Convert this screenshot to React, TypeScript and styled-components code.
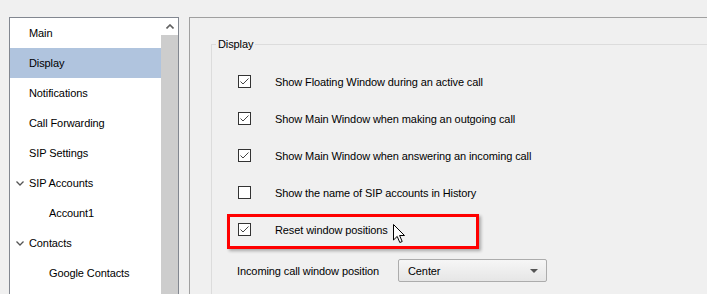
import React from "react";
import styled, { createGlobalStyle } from "styled-components";

const GlobalStyle = createGlobalStyle`
  html, body {
    margin: 0;
    padding: 0;
    background: #f0f0f0;
    font-family: "Liberation Sans", Arial, sans-serif;
    font-size: 11px;
    letter-spacing: -0.1px;
    color: #000;
    overflow: hidden;
  }
`;

const Page = styled.div`
  display: flex;
  gap: 10px;
  padding: 17px 0 0 9px;
  height: 294px;
  box-sizing: border-box;
  overflow: hidden;
`;

const Sidebar = styled.div`
  width: 170px;
  height: 300px;
  flex-shrink: 0;
  box-sizing: border-box;
  border: 1px solid #828790;
  background: #fff;
  display: flex;
`;

const TreeList = styled.div`
  flex: 1;
  display: flex;
  flex-direction: column;
`;

const TreeRow = styled.div<{ $depth: number; $selected?: boolean }>`
  height: 30px;
  flex-shrink: 0;
  display: flex;
  align-items: center;
  padding-left: ${(p) => 5 + p.$depth * 20}px;
  background: ${(p) => (p.$selected ? "#b0c4de" : "transparent")};
`;

const Expander = styled.span`
  width: 14px;
  display: flex;
  align-items: center;
  padding-left: 1px;
  box-sizing: border-box;
`;

const ScrollBar = styled.div`
  width: 17px;
  display: flex;
  flex-direction: column;
`;

const ScrollUp = styled.div`
  height: 17px;
  background: #fff;
  display: flex;
  align-items: center;
  justify-content: center;
`;

const ScrollTrack = styled.div`
  flex: 1;
  background: #cdcdcd;
`;

const Panel = styled.div`
  flex: 1;
  border-top: 1px solid #a0a0a0;
  border-left: 1px solid #a0a0a0;
  padding: 19px 0 0 21px;
`;

const Group = styled.fieldset`
  margin: 0;
  padding: 0;
  border: none;
  border-top: 1px solid #dcdcdc;
  border-left: 1px solid #dcdcdc;
  height: 300px;
`;

const Legend = styled.legend`
  padding: 0 2px;
  margin-left: 4px;
  line-height: 14px;
`;

const GroupBody = styled.div`
  display: flex;
  flex-direction: column;
  gap: 24px;
  padding: 24px 0 0 26px;
`;

const CheckRow = styled.div<{ $highlighted?: boolean }>`
  position: relative;
  height: 13px;
  display: flex;
  align-items: center;
  gap: 24px;
  white-space: nowrap;

  ${(p) =>
    p.$highlighted &&
    `
    &::after {
      content: "";
      position: absolute;
      left: -11px;
      top: -9px;
      width: 252px;
      height: 35px;
      box-sizing: border-box;
      border: 3px solid #ff0000;
      box-shadow: 2px 2px 3px rgba(0, 0, 0, 0.3);
    }
  `}
`;

const Box = styled.span`
  width: 13px;
  height: 13px;
  box-sizing: border-box;
  border: 1px solid #333;
  background: #fff;
  display: flex;
  flex-shrink: 0;
`;

const Cursor = styled.svg`
  position: absolute;
  left: 155px;
  top: 1px;
  z-index: 2;
`;

const ComboRow = styled.div`
  display: flex;
  align-items: center;
  margin-top: -1px;
  margin-left: -1px;
`;

const ComboLabel = styled.span`
  width: 161px;
  white-space: nowrap;
`;

const Combo = styled.div`
  width: 149px;
  height: 23px;
  box-sizing: border-box;
  border: 1px solid #acacac;
  border-radius: 2px;
  background: linear-gradient(#f6f6f6, #e6e6e6);
  display: flex;
  align-items: center;
  justify-content: space-between;
  padding: 0 8px 0 9px;
`;

const Chevron = ({ up }: { up?: boolean }) => (
  <svg width="8" height="5" viewBox="0 0 8 5">
    <polyline
      points={up ? "0.5,4.5 4,1 7.5,4.5" : "0.5,0.5 4,4 7.5,0.5"}
      fill="none"
      stroke={up ? "#606060" : "#555"}
      strokeWidth={up ? 1.6 : 1.3}
    />
  </svg>
);

const Check = ({ checked }: { checked: boolean }) => (
  <Box>
    {checked && (
      <svg width="11" height="11" viewBox="0 0 11 11">
        <polyline points="1.5,5.5 4,8 9.5,2.5" fill="none" stroke="#444" strokeWidth="1" />
      </svg>
    )}
  </Box>
);

const tree = [
  { label: "Main", depth: 0 },
  { label: "Display", depth: 0, selected: true },
  { label: "Notifications", depth: 0 },
  { label: "Call Forwarding", depth: 0 },
  { label: "SIP Settings", depth: 0 },
  { label: "SIP Accounts", depth: 0, open: true },
  { label: "Account1", depth: 1 },
  { label: "Contacts", depth: 0, open: true },
  { label: "Google Contacts", depth: 1 },
];

const options = [
  { label: "Show Floating Window during an active call", checked: true },
  { label: "Show Main Window when making an outgoing call", checked: true },
  { label: "Show Main Window when answering an incoming call", checked: true },
  { label: "Show the name of SIP accounts in History", checked: false },
];

export default function App() {
  return (
    <>
      <GlobalStyle />
      <Page>
        <Sidebar>
          <TreeList>
            {tree.map((t) => (
              <TreeRow key={t.label} $depth={t.depth} $selected={t.selected}>
                <Expander>{t.open && <Chevron />}</Expander>
                {t.label}
              </TreeRow>
            ))}
          </TreeList>
          <ScrollBar>
            <ScrollUp>
              <Chevron up />
            </ScrollUp>
            <ScrollTrack />
          </ScrollBar>
        </Sidebar>
        <Panel>
          <Group>
            <Legend>Display</Legend>
            <GroupBody>
              {options.map((o) => (
                <CheckRow key={o.label}>
                  <Check checked={o.checked} />
                  {o.label}
                </CheckRow>
              ))}
              <CheckRow $highlighted>
                <Check checked />
                Reset window positions
                <Cursor width="13" height="20" viewBox="0 0 13 20">
                  <path
                    d="M0.5,0.5 L0.5,16 L4.2,12.4 L6.8,18.5 L9.2,17.5 L6.6,11.5 L11.5,11.5 Z"
                    fill="#fff"
                    stroke="#000"
                    strokeWidth="1"
                    strokeLinejoin="round"
                  />
                </Cursor>
              </CheckRow>
              <ComboRow>
                <ComboLabel>Incoming call window position</ComboLabel>
                <Combo>
                  Center
                  <svg width="8" height="4" viewBox="0 0 8 4">
                    <polygon points="0,0 8,0 4,4" fill="#555" />
                  </svg>
                </Combo>
              </ComboRow>
            </GroupBody>
          </Group>
        </Panel>
      </Page>
    </>
  );
}
